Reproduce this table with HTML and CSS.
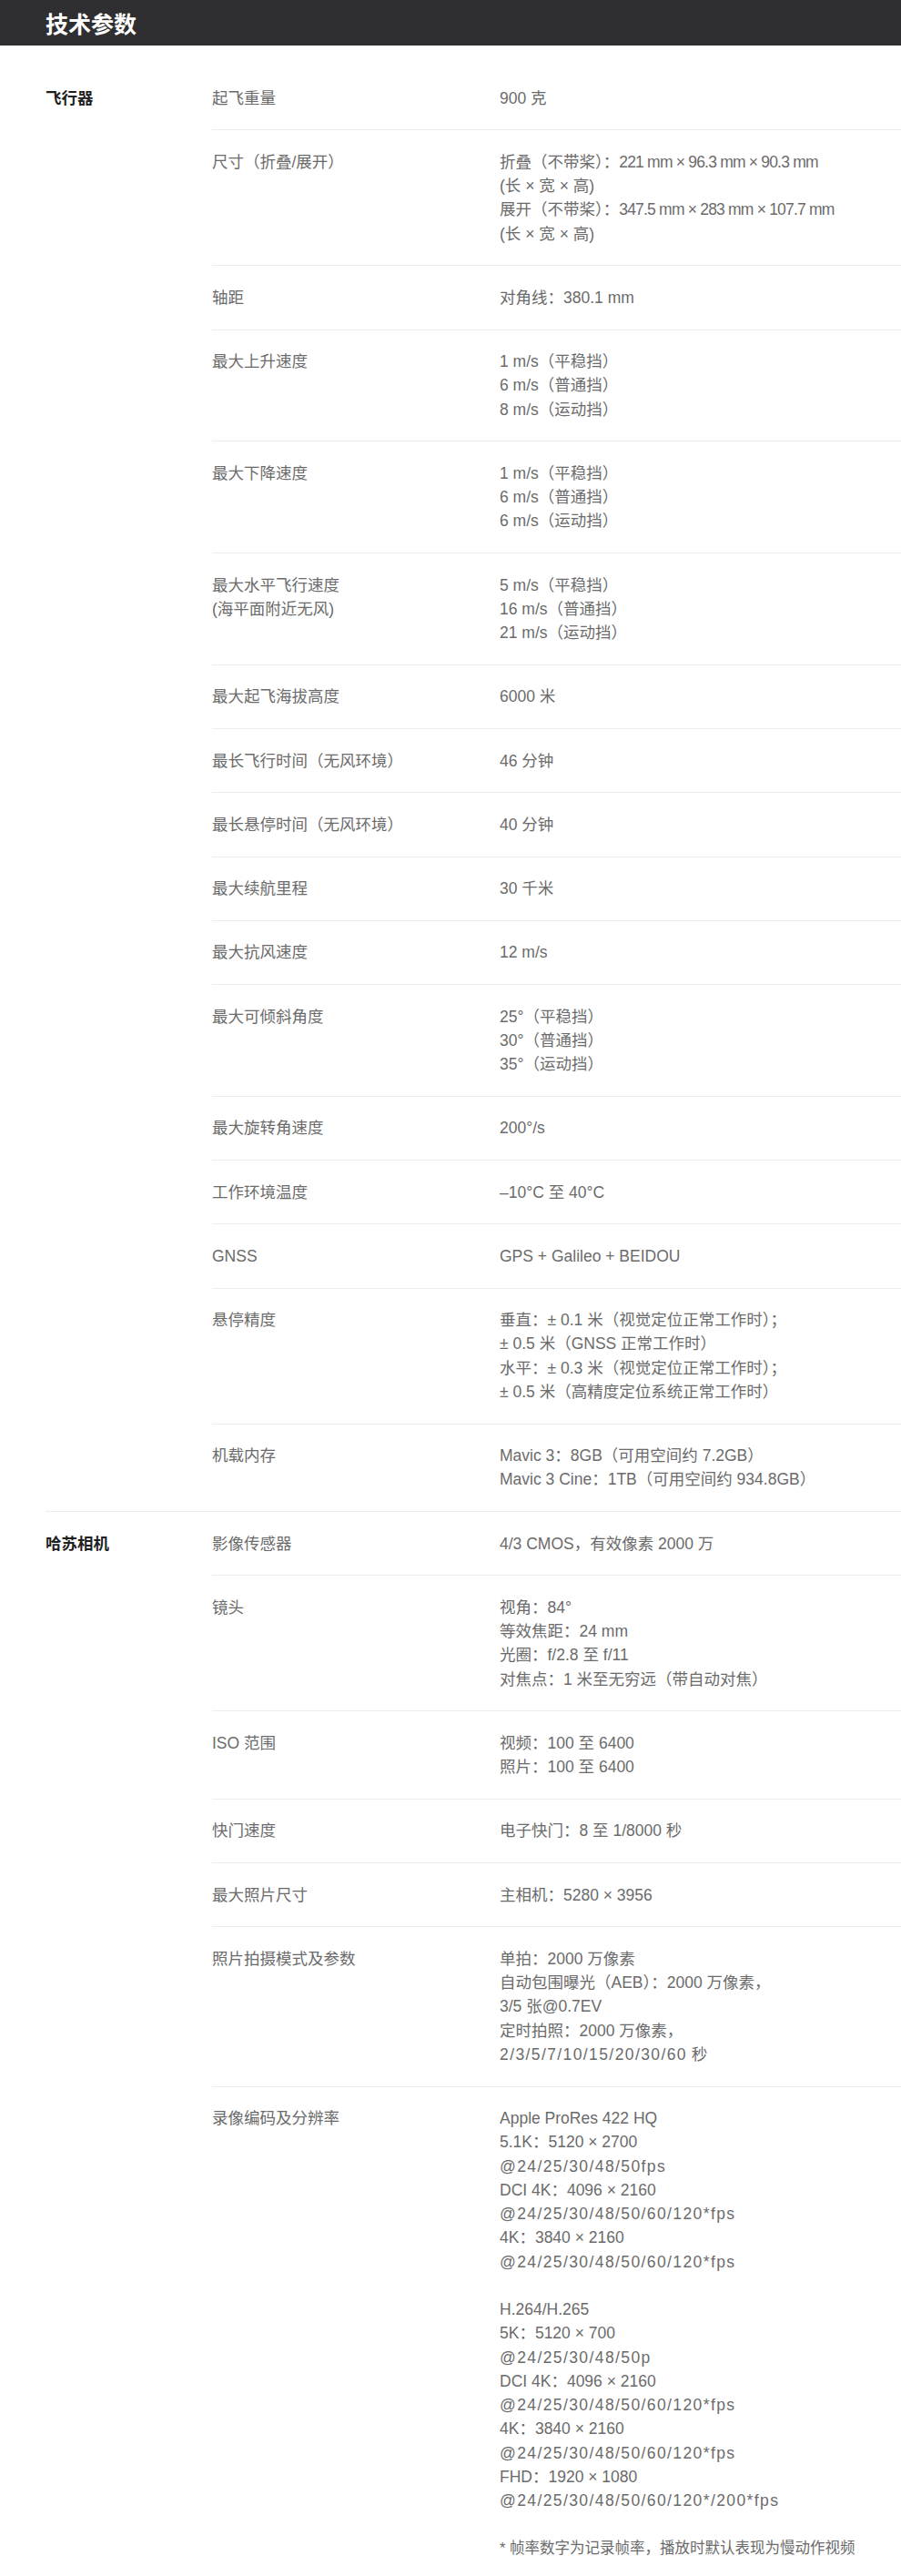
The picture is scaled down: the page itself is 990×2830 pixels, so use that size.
FILE: index.html
```html
<!DOCTYPE html>
<html lang="zh-CN">
  <head>
    <meta charset="UTF-8" />
    <meta name="viewport" content="width=device-width, initial-scale=1.0" />
    <title>技术参数</title>
    <link rel="stylesheet" href="styles.css">
  </head>
  <body>
    <header class="page-header">
      <h1>技术参数</h1>
    </header>

    <main class="specs">
      <!-- 飞行器 -->
      <section class="spec-group">
        <h2 class="group-title">飞行器</h2>
        <div class="spec-rows">
          <div class="spec-row">
            <div class="spec-name">起飞重量</div>
            <div class="spec-value">900 克</div>
          </div>
          <div class="spec-row">
            <div class="spec-name">尺寸（折叠/展开）</div>
            <div class="spec-value">
              折叠（不带桨）：<span class="dim">221 mm × 96.3 mm × 90.3 mm</span><br />
              (长 × 宽 × 高)<br />
              展开（不带桨）：<span class="dim">347.5 mm × 283 mm × 107.7 mm</span><br />
              (长 × 宽 × 高)
            </div>
          </div>
          <div class="spec-row">
            <div class="spec-name">轴距</div>
            <div class="spec-value">对角线：380.1 mm</div>
          </div>
          <div class="spec-row">
            <div class="spec-name">最大上升速度</div>
            <div class="spec-value">
              1 m/s（平稳挡）<br />
              6 m/s（普通挡）<br />
              8 m/s（运动挡）
            </div>
          </div>
          <div class="spec-row">
            <div class="spec-name">最大下降速度</div>
            <div class="spec-value">
              1 m/s（平稳挡）<br />
              6 m/s（普通挡）<br />
              6 m/s（运动挡）
            </div>
          </div>
          <div class="spec-row">
            <div class="spec-name">最大水平飞行速度<br />(海平面附近无风)</div>
            <div class="spec-value">
              5 m/s（平稳挡）<br />
              16 m/s（普通挡）<br />
              21 m/s（运动挡）
            </div>
          </div>
          <div class="spec-row">
            <div class="spec-name">最大起飞海拔高度</div>
            <div class="spec-value">6000 米</div>
          </div>
          <div class="spec-row">
            <div class="spec-name">最长飞行时间（无风环境）</div>
            <div class="spec-value">46 分钟</div>
          </div>
          <div class="spec-row">
            <div class="spec-name">最长悬停时间（无风环境）</div>
            <div class="spec-value">40 分钟</div>
          </div>
          <div class="spec-row">
            <div class="spec-name">最大续航里程</div>
            <div class="spec-value">30 千米</div>
          </div>
          <div class="spec-row">
            <div class="spec-name">最大抗风速度</div>
            <div class="spec-value">12 m/s</div>
          </div>
          <div class="spec-row">
            <div class="spec-name">最大可倾斜角度</div>
            <div class="spec-value">
              25°（平稳挡）<br />
              30°（普通挡）<br />
              35°（运动挡）
            </div>
          </div>
          <div class="spec-row">
            <div class="spec-name">最大旋转角速度</div>
            <div class="spec-value">200°/s</div>
          </div>
          <div class="spec-row">
            <div class="spec-name">工作环境温度</div>
            <div class="spec-value">–10°C 至 40°C</div>
          </div>
          <div class="spec-row">
            <div class="spec-name">GNSS</div>
            <div class="spec-value">GPS + Galileo + BEIDOU</div>
          </div>
          <div class="spec-row">
            <div class="spec-name">悬停精度</div>
            <div class="spec-value">
              垂直：± 0.1 米（视觉定位正常工作时）；<br />
              ± 0.5 米（GNSS 正常工作时）<br />
              水平：± 0.3 米（视觉定位正常工作时）；<br />
              ± 0.5 米（高精度定位系统正常工作时）
            </div>
          </div>
          <div class="spec-row">
            <div class="spec-name">机载内存</div>
            <div class="spec-value">
              Mavic 3：8GB（可用空间约 7.2GB）<br />
              Mavic 3 Cine：1TB（可用空间约 934.8GB）
            </div>
          </div>
        </div>
      </section>

      <!-- 哈苏相机 -->
      <section class="spec-group">
        <h2 class="group-title">哈苏相机</h2>
        <div class="spec-rows">
          <div class="spec-row">
            <div class="spec-name">影像传感器</div>
            <div class="spec-value">4/3 CMOS，有效像素 2000 万</div>
          </div>
          <div class="spec-row">
            <div class="spec-name">镜头</div>
            <div class="spec-value">
              视角：84°<br />
              等效焦距：24 mm<br />
              光圈：f/2.8 至 f/11<br />
              对焦点：1 米至无穷远（带自动对焦）
            </div>
          </div>
          <div class="spec-row">
            <div class="spec-name">ISO 范围</div>
            <div class="spec-value">
              视频：100 至 6400<br />
              照片：100 至 6400
            </div>
          </div>
          <div class="spec-row">
            <div class="spec-name">快门速度</div>
            <div class="spec-value">电子快门：8 至 1/8000 秒</div>
          </div>
          <div class="spec-row">
            <div class="spec-name">最大照片尺寸</div>
            <div class="spec-value">主相机：5280 × 3956</div>
          </div>
          <div class="spec-row">
            <div class="spec-name">照片拍摄模式及参数</div>
            <div class="spec-value">
              单拍：2000 万像素<br />
              自动包围曝光（AEB）：2000 万像素，<br />
              3/5 张@0.7EV<br />
              定时拍照：2000 万像素，<br />
              <span class="rate">2/3/5/7/10/15/20/30/60</span> 秒
            </div>
          </div>
          <div class="spec-row">
            <div class="spec-name">录像编码及分辨率</div>
            <div class="spec-value">
              Apple ProRes 422 HQ<br />
              5.1K：5120 × 2700<br />
              <span class="rate">@24/25/30/48/50fps</span><br />
              DCI 4K：4096 × 2160<br />
              <span class="rate">@24/25/30/48/50/60/120*fps</span><br />
              4K：3840 × 2160<br />
              <span class="rate">@24/25/30/48/50/60/120*fps</span><br />
              <br />
              H.264/H.265<br />
              5K：5120 × 700<br />
              <span class="rate">@24/25/30/48/50p</span><br />
              DCI 4K：4096 × 2160<br />
              <span class="rate">@24/25/30/48/50/60/120*fps</span><br />
              4K：3840 × 2160<br />
              <span class="rate">@24/25/30/48/50/60/120*fps</span><br />
              FHD：1920 × 1080<br />
              <span class="rate">@24/25/30/48/50/60/120*/200*fps</span>
              <p class="note">* 帧率数字为记录帧率，播放时默认表现为慢动作视频</p>
            </div>
          </div>
        </div>
      </section>
    </main>
  </body>
</html>
```

FILE: styles.css
```css
:root {
  --header-bg: #2f2f31;
  --text: #6b6b6b;
  --title: #1f1f1f;
  --line: #ececec;
}

* {
  box-sizing: border-box;
}

body {
  margin: 0;
  font-family: "Liberation Sans", "Noto Sans CJK SC", sans-serif;
  color: var(--text);
  background-color: #fff;
}

.page-header {
  background-color: var(--header-bg);
  height: 50px;
  padding: 0 50px;
  display: flex;
  align-items: center;
}

.page-header h1 {
  margin: 0;
  font-size: 25px;
  font-weight: 700;
  color: #fff;
}

.specs {
  padding: 23px 0 0 50px;
}

.spec-group {
  display: flex;
  border-top: 1px solid var(--line);
}

.spec-group:first-child {
  border-top: none;
}

.group-title {
  width: 183px;
  flex-shrink: 0;
  margin: 0;
  padding: 21.5px 0;
  font-size: 17.5px;
  line-height: 1.5;
  font-weight: 700;
  color: var(--title);
}

.spec-rows {
  flex: 1;
}

.spec-row {
  display: flex;
  padding: 21.5px 0;
  border-top: 1px solid var(--line);
  font-size: 17.5px;
  line-height: 1.5;
}

.spec-row:first-child {
  border-top: none;
}

.spec-name {
  width: 316px;
  flex-shrink: 0;
}

.spec-value {
  flex: 1;
}

/* the frame-rate lists are set wider, the sizes a bit tighter */
.rate {
  letter-spacing: 1.4px;
}

.dim {
  letter-spacing: -0.8px;
}

.note {
  margin: 26px 0 0;
  font-size: 16.5px;
  line-height: 26.25px;
}
```
